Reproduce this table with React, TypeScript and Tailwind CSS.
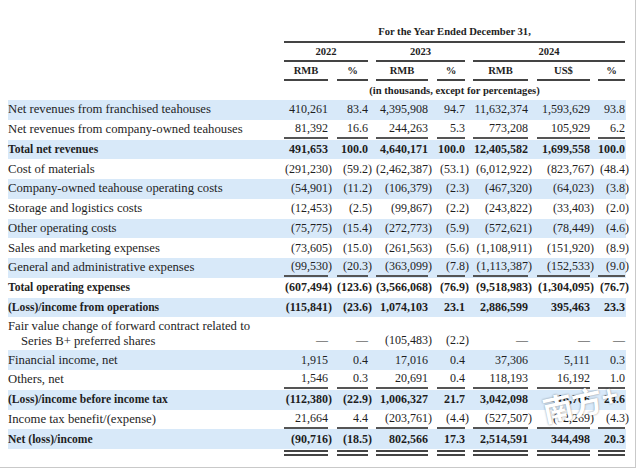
import React from "react";

// column geometry: label 276px from x=8, then seven value columns
const COLS = [
  "w-[44px] ml-0",
  "w-[31px] ml-[9px]",
  "w-[52px] ml-[8px]",
  "w-[28px] ml-[9px]",
  "w-[55px] ml-[8px]",
  "w-[53px] ml-[9px]",
  "w-[27px] ml-[8px]",
];

type Row = {
  label: string;
  label2?: string;
  v: string[];
  bold?: boolean;
  shade?: boolean;
  line?: boolean;
};

const rows: Row[] = [
  { label: "Net revenues from franchised teahouses", shade: true, v: ["410,261", "83.4", "4,395,908", "94.7", "11,632,374", "1,593,629", "93.8"] },
  { label: "Net revenues from company-owned teahouses", line: true, v: ["81,392", "16.6", "244,263", "5.3", "773,208", "105,929", "6.2"] },
  { label: "Total net revenues", bold: true, shade: true, v: ["491,653", "100.0", "4,640,171", "100.0", "12,405,582", "1,699,558", "100.0"] },
  { label: "Cost of materials", v: ["(291,230)", "(59.2)", "(2,462,387)", "(53.1)", "(6,012,922)", "(823,767)", "(48.4)"] },
  { label: "Company-owned teahouse operating costs", shade: true, v: ["(54,901)", "(11.2)", "(106,379)", "(2.3)", "(467,320)", "(64,023)", "(3.8)"] },
  { label: "Storage and logistics costs", v: ["(12,453)", "(2.5)", "(99,867)", "(2.2)", "(243,822)", "(33,403)", "(2.0)"] },
  { label: "Other operating costs", shade: true, v: ["(75,775)", "(15.4)", "(272,773)", "(5.9)", "(572,621)", "(78,449)", "(4.6)"] },
  { label: "Sales and marketing expenses", v: ["(73,605)", "(15.0)", "(261,563)", "(5.6)", "(1,108,911)", "(151,920)", "(8.9)"] },
  { label: "General and administrative expenses", shade: true, line: true, v: ["(99,530)", "(20.3)", "(363,099)", "(7.8)", "(1,113,387)", "(152,533)", "(9.0)"] },
  { label: "Total operating expenses", bold: true, v: ["(607,494)", "(123.6)", "(3,566,068)", "(76.9)", "(9,518,983)", "(1,304,095)", "(76.7)"] },
  { label: "(Loss)/income from operations", bold: true, shade: true, v: ["(115,841)", "(23.6)", "1,074,103", "23.1", "2,886,599", "395,463", "23.3"] },
  { label: "Fair value change of forward contract related to", label2: "Series B+ preferred shares", v: ["—", "—", "(105,483)", "(2.2)", "—", "—", "—"] },
  { label: "Financial income, net", shade: true, v: ["1,915", "0.4", "17,016", "0.4", "37,306", "5,111", "0.3"] },
  { label: "Others, net", line: true, v: ["1,546", "0.3", "20,691", "0.4", "118,193", "16,192", "1.0"] },
  { label: "(Loss)/income before income tax", bold: true, shade: true, v: ["(112,380)", "(22.9)", "1,006,327", "21.7", "3,042,098", "416,766", "24.6"] },
  { label: "Income tax benefit/(expense)", line: true, v: ["21,664", "4.4", "(203,761)", "(4.4)", "(527,507)", "(72,269)", "(4.3)"] },
  { label: "Net (loss)/income", bold: true, shade: true, v: ["(90,716)", "(18.5)", "802,566", "17.3", "2,514,591", "344,498", "20.3"] },
];

// closing paren hangs past the column edge, as in printed statements
const Value = ({ s }: { s: string }) => {
  if (s.endsWith(")")) {
    return (
      <>
        {s.slice(0, -1)}
        <span className="mr-[-4px]">)</span>
      </>
    );
  }
  return <>{s}</>;
};

const TableRow = ({ r }: { r: Row }) => (
  <div
    className={
      "flex " +
      (r.label2 ? "h-[33px] items-end pb-[1px] " : "h-[19.75px] items-center ") +
      (r.shade ? "bg-[#d8e9f9]" : "")
    }
  >
    <div
      className={
        "w-[276px] shrink-0 leading-[15px] " +
        (r.bold ? "font-bold text-[11.6px]" : "text-[12.7px]")
      }
    >
      {r.label}
      {r.label2 && <div className="pl-[13px]">{r.label2}</div>}
    </div>
    {r.v.map((s, i) => (
      <div
        key={i}
        className={
          COLS[i] +
          " shrink-0 text-right text-[12px] leading-[17px] " +
          (r.bold ? "font-bold " : "") +
          (r.line ? "border-b-2 border-[#555] " : "")
        }
      >
        <Value s={s} />
      </div>
    ))}
  </div>
);

export default function App() {
  return (
    <div className="w-[640px] h-[471px] bg-white overflow-hidden">
      <div
        className="relative w-[636px] h-[468px] border-r border-b border-[#c9c9c9] pl-[8px] pt-[22px] text-[#1e1e1e]"
        style={{ fontFamily: '"Liberation Serif", "Times New Roman", serif' }}
      >
        {/* header */}
        <div className="flex">
          <div className="w-[276px] shrink-0" />
          <div className="w-[341px] h-[21px] flex items-center justify-center border-b-2 border-[#444] font-bold text-[10.6px]">
            For the Year Ended December 31,
          </div>
        </div>
        <div className="flex">
          <div className="w-[276px] shrink-0" />
          <div className="w-[84px] h-[19px] flex items-center justify-center border-b-2 border-[#444] font-bold text-[10.6px]">
            2022
          </div>
          <div className="w-[89px] ml-[8px] h-[19px] flex items-center justify-center border-b-2 border-[#444] font-bold text-[10.6px]">
            2023
          </div>
          <div className="w-[152px] ml-[8px] h-[19px] flex items-center justify-center border-b-2 border-[#444] font-bold text-[10.6px]">
            2024
          </div>
        </div>
        <div className="flex">
          <div className="w-[276px] shrink-0" />
          {["RMB", "%", "RMB", "%", "RMB", "US$", "%"].map((h, i) => (
            <div
              key={i}
              className={
                COLS[i] +
                " shrink-0 h-[19px] flex items-center justify-center border-b-2 border-[#444] font-bold text-[10.6px]"
              }
            >
              {h}
            </div>
          ))}
        </div>
        <div className="flex">
          <div className="w-[276px] shrink-0" />
          <div className="w-[341px] h-[19px] flex items-center justify-center font-bold text-[10.6px]">
            (in thousands, except for percentages)
          </div>
        </div>

        {/* body */}
        <div className="w-[618px]">
          {rows.map((r, i) => (
            <TableRow key={i} r={r} />
          ))}
          <div className="flex pt-[1px]">
            <div className="w-[276px] shrink-0" />
            {COLS.map((c, i) => (
              <div key={i} className={c + " shrink-0 h-[6px] border-b-[6px] border-double border-[#444]"} />
            ))}
          </div>
        </div>

        {/* watermark */}
        <div
          className="absolute left-[542px] top-[380px] text-white text-[30px] font-bold -rotate-12 select-none [text-shadow:0_0_2px_rgba(0,0,0,0.45)]"
          style={{ fontFamily: '"Noto Sans CJK SC", sans-serif' }}
        >
          南方<span className="text-[28px] align-top">+</span>
        </div>
      </div>
    </div>
  );
}
